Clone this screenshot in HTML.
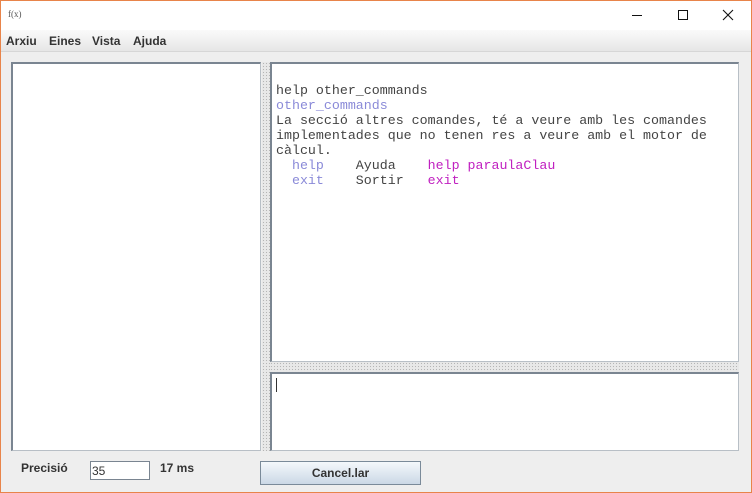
<!DOCTYPE html><html><head><style>
*{margin:0;padding:0;box-sizing:border-box}
body{width:752px;height:493px;overflow:hidden;background:#eeeeee;font-family:"Liberation Sans",sans-serif;position:relative}
.abs{position:absolute}
.frame{left:0;top:0;width:752px;height:493px;border:1px solid #e8844a;pointer-events:none}
.title{left:0;top:0;width:752px;height:30px;background:#fff}
.menu{left:0;top:30px;width:752px;height:22px;background:linear-gradient(#fafafa,#e6e6e6);border-bottom:1px solid #d6d6d6;font-size:12px;font-weight:bold;color:#333}
.menu span{position:absolute;top:4px}
.panel{background:#fff;border-top:2px solid #7a8591;border-left:2px solid #7a8591;border-right:1px solid #b8bfc6;border-bottom:1px solid #b8bfc6}
.dots{background-image:radial-gradient(#b5b5b5 0.6px,transparent 0.8px);background-size:3px 3px;background-color:#e8e8e8}
pre{font-family:"Liberation Mono",monospace;font-size:13.3px;line-height:15px;color:#444}
.b{color:#8a8ad8}.m{color:#c020c0}
</style></head><body>
<div class="abs title">
<div class="abs" style="left:8px;top:9px;font-size:9px;color:#555;font-family:'Liberation Serif',serif">f(x)</div>
<svg class="abs" style="left:628px;top:8px" width="110" height="14"><line x1="4" y1="7.5" x2="14" y2="7.5" stroke="#111"/><rect x="50.5" y="2.5" width="9" height="9" fill="none" stroke="#111"/><path d="M95 2L105 12M105 2L95 12" stroke="#111" stroke-width="1.1"/></svg>
</div>
<div class="abs menu"><span style="left:6px">Arxiu</span><span style="left:49px">Eines</span><span style="left:92px">Vista</span><span style="left:133px">Ajuda</span></div>
<div class="abs panel" style="left:11px;top:62px;width:250px;height:389px"></div>
<div class="abs dots" style="left:262px;top:62px;width:8px;height:389px"></div>
<div class="abs panel" style="left:270px;top:62px;width:469px;height:300px">
<pre style="position:absolute;left:4px;top:19px">help other_commands
<span class="b">other_commands</span>
La secció altres comandes, té a veure amb les comandes
implementades que no tenen res a veure amb el motor de
càlcul.
  <span class="b">help</span>    Ayuda    <span class="m">help paraulaClau</span>
  <span class="b">exit</span>    Sortir   <span class="m">exit</span></pre></div>
<div class="abs dots" style="left:270px;top:362px;width:469px;height:10px"></div>
<div class="abs panel" style="left:270px;top:372px;width:469px;height:79px"><div class="abs" style="left:4px;top:4px;width:1px;height:14px;background:#333"></div></div>
<div class="abs" style="left:21px;top:461px;font-size:12px;font-weight:bold;color:#333">Precisió</div>
<div class="abs" style="left:90px;top:461px;width:60px;height:19px;background:#fff;border:1px solid #7a8591;font-size:12px;color:#333;padding:2px 0 0 1px">35</div>
<div class="abs" style="left:160px;top:461px;font-size:12px;font-weight:bold;color:#333">17 ms</div>
<div class="abs" style="left:260px;top:461px;width:161px;height:24px;border:1px solid #7a8a99;background:linear-gradient(#f4f8fc,#cbd8e6);font-size:12px;font-weight:bold;color:#333;text-align:center;line-height:22px">Cancel.lar</div>
<div class="abs frame"></div>
</body></html>
